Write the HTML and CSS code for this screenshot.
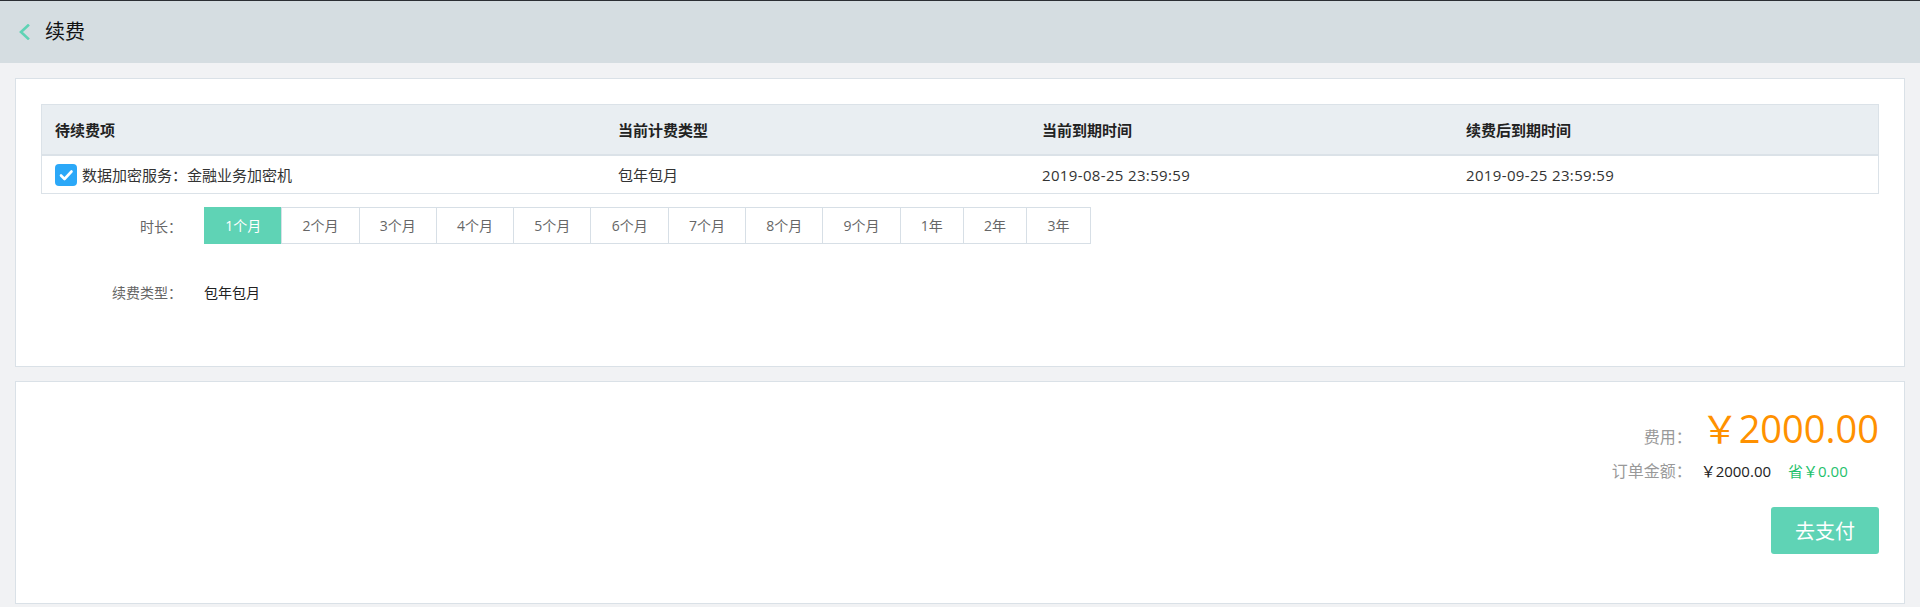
FILE: index.html
```html
<!DOCTYPE html>
<html lang="zh-CN">
<head>
<meta charset="utf-8">
<title>续费</title>
<link rel="stylesheet" href="styles.css">
</head>
<body>
<header class="topbar">
  <svg class="back" width="14" height="16" viewBox="0 0 14 16"><polyline points="11,1.5 4,8 11,14.5" fill="none" stroke="#5fd3b5" stroke-width="2.6" stroke-linecap="square"/></svg>
  <h1 class="title">续费</h1>
</header>
<main class="main">
  <section class="card card-form">
    <div class="table">
      <div class="thead">
        <div class="cell">待续费项</div>
        <div class="cell">当前计费类型</div>
        <div class="cell">当前到期时间</div>
        <div class="cell">续费后到期时间</div>
      </div>
      <div class="trow">
        <div class="cell item">
          <svg class="check" width="22" height="22" viewBox="0 0 22 22"><rect width="22" height="22" rx="4" fill="#2ba8f8"/><polyline points="6,11.5 9.5,15 16.5,7.5" fill="none" stroke="#fff" stroke-width="2.6" stroke-linecap="round" stroke-linejoin="round"/></svg>
          <span>数据加密服务：金融业务加密机</span>
        </div>
        <div class="cell">包年包月</div>
        <div class="cell date">2019-08-25 23:59:59</div>
        <div class="cell date">2019-09-25 23:59:59</div>
      </div>
    </div>
    <div class="form-row duration-row">
      <div class="label">时长：</div>
      <div class="options">
        <span class="opt active">1个月</span>
        <span class="opt">2个月</span>
        <span class="opt">3个月</span>
        <span class="opt">4个月</span>
        <span class="opt">5个月</span>
        <span class="opt">6个月</span>
        <span class="opt">7个月</span>
        <span class="opt">8个月</span>
        <span class="opt">9个月</span>
        <span class="opt">1年</span>
        <span class="opt">2年</span>
        <span class="opt">3年</span>
      </div>
    </div>
    <div class="form-row type-row">
      <div class="label">续费类型：</div>
      <div class="value">包年包月</div>
    </div>
  </section>
  <section class="card card-pay">
    <div class="summary">
      <div class="s-label">费用：</div>
      <div class="price">￥2000.00</div>
      <div class="s-label s-label2">订单金额：</div>
      <div class="order"><span class="amount">￥2000.00</span><span class="save">省￥0.00</span></div>
    </div>
    <div class="actions">
      <button class="pay" type="button">去支付</button>
    </div>
  </section>
</main>
</body>
</html>
```
FILE: styles.css
```css
* { box-sizing: border-box; }
html, body { margin: 0; padding: 0; }
body {
  background: #f1f2f4;
  font-family: "Open Sans", "Noto Sans CJK SC", sans-serif;
  color: #333;
  font-size: 14px;
}
.topbar {
  height: 63px;
  border-top: 1px solid #2b2e33;
  background: #d5dde1;
  display: flex;
  align-items: center;
  padding-left: 17px;
}
.back { display: block; margin-right: 14px; }
.title {
  margin: 0;
  font-size: 20px;
  font-weight: normal;
  color: #111;
  line-height: 28px;
}
.main { padding: 15px 15px 0; }
.card {
  background: #fff;
  border: 1px solid #dae1e7;
}
.card-form { padding: 25px 25px 63px; }
.table { border: 1px solid #dbe2e8; }
.thead, .trow {
  display: grid;
  grid-template-columns: 563fr 424fr 424fr 425fr;
}
.thead {
  height: 51px;
  background: #e9eef2;
  border-bottom: 2px solid #dbe2e8;
  font-weight: bold;
  font-size: 15px;
  color: #222;
}
.trow { height: 37px; font-size: 15px; color: #333; }
.cell {
  display: flex;
  align-items: center;
  padding-left: 13px;
  white-space: nowrap;
}
.date { letter-spacing: 0.35px; }
.item .check { display: block; margin-right: 5px; flex: none; }
.form-row { display: flex; align-items: center; }
.label {
  width: 141px;
  margin-right: 22px;
  text-align: right;
  color: #666;
  font-size: 14px;
}
.duration-row { margin-top: 13px; }
.options { display: flex; }
.opt {
  height: 37px;
  line-height: 35px;
  padding: 0 20.15px;
  border: 1px solid #d7dfe6;
  margin-left: -1px;
  color: #666;
  font-size: 14px;
  background: #fff;
}
.opt:first-child { margin-left: 0; }
.opt.active {
  background: #5fd3b5;
  border-color: #5fd3b5;
  color: #fff;
}
.type-row { margin-top: 39px; line-height: 20px; }
.value { color: #222; font-size: 14px; }
.card-pay {
  margin-top: 14px;
  padding: 24px 25px 49px;
}
.summary {
  display: grid;
  grid-template-columns: auto auto;
  justify-content: end;
  align-items: baseline;
}
.s-label {
  text-align: right;
  color: #999;
  font-size: 16px;
  padding-right: 9px;
}
.price {
  font-size: 38px;
  line-height: 44px;
  color: #ff9100;
}
.s-label2, .order { margin-top: 9px; line-height: 24px; }
.amount { font-size: 15px; color: #222; }
.save { font-size: 15px; color: #1fc16c; margin-left: 17px; }
.actions { display: flex; justify-content: flex-end; margin-top: 23px; }
.pay {
  width: 108px;
  height: 47px;
  border: none;
  border-radius: 3px;
  background: #5fd3b5;
  color: #fff;
  font-family: "Open Sans", "Noto Sans CJK SC", sans-serif;
  font-size: 20px;
  padding: 0;
  cursor: pointer;
}
```
